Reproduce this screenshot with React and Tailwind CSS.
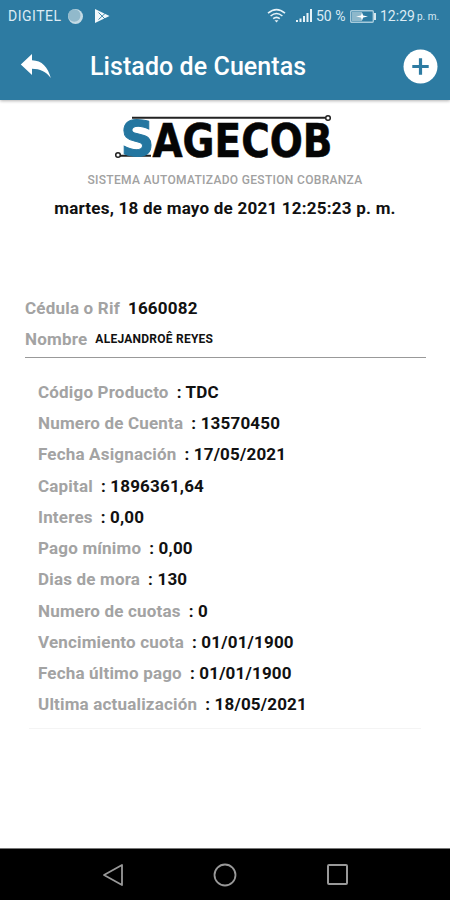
const rows = [
  ["Código Producto", "TDC"],
  ["Numero de Cuenta", "13570450"],
  ["Fecha Asignación", "17/05/2021"],
  ["Capital", "1896361,64"],
  ["Interes", "0,00"],
  ["Pago mínimo", "0,00"],
  ["Dias de mora", "130"],
  ["Numero de cuotas", "0"],
  ["Vencimiento cuota", "01/01/1900"],
  ["Fecha último pago", "01/01/1900"],
  ["Ultima actualización", "18/05/2021"],
];

function StatusBar() {
  return (
    <div className="flex h-8 items-center pl-2 pr-[10px] text-[14px] leading-8 text-[#dcebf4]">
      <span className="w-[54px] whitespace-nowrap tracking-[0.5px]">DIGITEL</span>
      <svg className="ml-[5px]" width="17" height="17" viewBox="0 0 17 17">
        <circle cx="8.5" cy="8.5" r="7.5" fill="#c4dbe5" />
        <circle cx="7.3" cy="7.5" r="6.2" fill="#91b9cb" />
      </svg>
      <svg className="ml-[10px]" width="17" height="16" viewBox="0 0 17 16">
        <path d="M1 1 15.5 8 1 15Z" fill="#f1f8fb" />
        <path d="M4.5 4.5 11 11M4.5 11.5l7-6.5" stroke="#2d7ba2" strokeWidth=".9" />
      </svg>
      <svg className="ml-auto" width="19" height="16" viewBox="0 0 19 16" fill="none" stroke="#e7f3f8" strokeWidth="1.6">
        <path d="M1 5.2Q9.5-2 18 5.2M3.6 8Q9.5 3 15.4 8M6.2 10.7Q9.5 8 12.8 10.7" />
        <path d="m7.5 12.2 2 2.2 2-2.2Z" fill="#e7f3f8" stroke="none" />
      </svg>
      <svg className="ml-[10px]" width="17" height="14" viewBox="0 0 17 14" fill="#e7f3f8">
        <path d="M0 11h2v2H0zM3.5 9.5h2V13h-2zM7 7h2v6H7zM10.5 4h2v9h-2zM14 0h2v13h-2z" />
      </svg>
      <span className="ml-[3px] w-[31px] whitespace-nowrap">50 %</span>
      <svg className="ml-[3px]" width="27" height="13" viewBox="0 0 27 13">
        <rect x=".7" y=".7" width="22.6" height="11.6" rx="1" fill="none" stroke="#a7cbdc" strokeWidth="1.4" />
        <path d="M2 2h10v9H2z" fill="#8eb8cb" />
        <path d="M24 3h2v7h-2z" fill="#d6e8ef" />
        <path d="m6 6.5 5-1 1-3 1.2 3 4.8 1-4.8 1-1.2 3-1-3z" fill="#fff" />
      </svg>
      <span className="ml-[3px] w-[37px] whitespace-nowrap">12:29</span>
      <span className="w-[23px] whitespace-nowrap pt-[2px] text-[10px]">p. m.</span>
    </div>
  );
}

function Logo() {
  return (
    <svg className="block" width="330" height="72" viewBox="60 100 330 72" fontFamily="'DejaVu Sans', sans-serif" fontWeight="700">
      <path d="M132 117.7h193M120 155.7h31" stroke="#222" strokeWidth="2" />
      <text x="120.5" y="156" fontSize="50" textLength="34" lengthAdjust="spacingAndGlyphs" fill="#2476a0" stroke="#2476a0" strokeWidth="1">S</text>
      <text x="152.5" y="156.5" fontSize="45.5" textLength="180" lengthAdjust="spacingAndGlyphs" fill="#050505" stroke="#050505" strokeWidth=".6">AGECOB</text>
      <circle cx="328" cy="118" r="2.3" fill="#fff" stroke="#222" strokeWidth="1.5" />
      <circle cx="118" cy="155" r="2.3" fill="#fff" stroke="#222" strokeWidth="1.5" />
    </svg>
  );
}

export default function App() {
  return (
    <div className="flex h-[900px] w-[450px] flex-col overflow-hidden bg-white font-['Roboto',sans-serif]">
      <header className="h-[100px] shrink-0 bg-[#2d7ba2] shadow-[0_1px_3px_rgba(0,0,0,0.3)]">
        <StatusBar />
        <div className="flex h-[68px] items-center pl-5 pr-3">
          <svg width="32" height="26" viewBox="0 0 32 26" fill="#fff">
            <path d="M.8 11.5 12 1v6.2C22 7.5 28 14 30.8 25 26 18.5 20 15.7 12 15.7V22Z" />
          </svg>
          <h1 className="ml-[38px] whitespace-nowrap pt-[2px] text-[25px] font-medium leading-8 tracking-[0.07px] text-white">Listado de Cuentas</h1>
          <svg className="ml-auto" width="35" height="35" viewBox="0 0 35 35">
            <circle cx="17.5" cy="17.5" r="17" fill="#fff" />
            <path d="M17.5 9.3v16.4M9.3 17.5h16.4" stroke="#2d7ba2" strokeWidth="3.2" />
          </svg>
        </div>
      </header>
      <main className="flex-1">
        <section className="flex flex-col items-center">
          <Logo />
          <p className="whitespace-nowrap text-[12px] font-medium leading-4 tracking-[0.32px] text-[#a1a1a1]">SISTEMA AUTOMATIZADO GESTION COBRANZA</p>
          <p className="mt-[10px] whitespace-nowrap text-[17px] font-bold leading-5 tracking-[0.23px] text-[#111]">martes, 18 de mayo de 2021 12:25:23 p. m.</p>
        </section>
        <section className="ml-[25px] mr-6 mt-[75px] h-[65px] border-b border-[#999]">
          <div className="flex h-[31px] items-center gap-2 text-[17px] font-bold tracking-[0.2px]">
            <span className="text-[#a3a3a3]">Cédula o Rif</span>
            <span className="text-[#111]">1660082</span>
          </div>
          <div className="flex h-[31px] items-center gap-2 tracking-[0.2px]">
            <span className="text-[17px] font-bold text-[#a3a3a3]">Nombre</span>
            <span className="pb-[2px] text-[12px] font-bold tracking-[0.25px] text-[#111]">ALEJANDROÊ REYES</span>
          </div>
        </section>
        <section className="mx-[29px] mt-[19px] h-[352px] border-b border-[#f4f4f4] pl-[9px]">
          {rows.map(([label, value]) => (
            <div key={label} className="flex h-[31.25px] items-center gap-2 whitespace-nowrap text-[17px] font-bold tracking-[0.18px]">
              <span className="text-[#a3a3a3]">{label}</span>
              <span className="text-[#111]">: {value}</span>
            </div>
          ))}
        </section>
      </main>
      <nav className="flex h-[52px] shrink-0 items-center border-t border-[#777] bg-black pl-[102px]">
        <svg width="22" height="24" viewBox="0 0 22 24" fill="none" stroke="#999" strokeWidth="1.8" strokeLinejoin="round">
          <path d="M20 2v20L2 12Z" />
        </svg>
        <svg className="ml-[89px]" width="24" height="24" viewBox="0 0 24 24" fill="none" stroke="#999" strokeWidth="1.8">
          <circle cx="12" cy="12" r="10.5" />
        </svg>
        <svg className="ml-[89px]" width="24" height="24" viewBox="0 0 24 24" fill="none" stroke="#999" strokeWidth="2">
          <rect x="2" y="2" width="19" height="19" rx="1" />
        </svg>
      </nav>
    </div>
  );
}
